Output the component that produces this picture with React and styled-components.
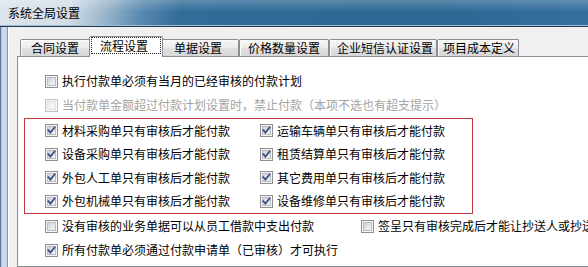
import React from 'react';
import styled, { createGlobalStyle } from 'styled-components';

const Global = createGlobalStyle`
  html, body { margin: 0; padding: 0; background: #f0f0f0; }
  #root { width: 588px; height: 267px; }
`;

const FONT = `"Noto Sans CJK SC", "Noto Sans", sans-serif`;

const Window = styled.div`
  width: 588px;
  height: 267px;
  overflow: hidden;
  display: flex;
  flex-direction: column;
  font-family: ${FONT};
  font-size: 12px;
  color: #000;
`;

const TitleBar = styled.div`
  flex: none;
  height: 27px;
  box-sizing: border-box;
  padding-left: 8px;
  display: flex;
  align-items: center;
  border-bottom: 1px solid #1e3a54;
  box-shadow: inset 0 -1px 0 #a3bfd4;
  background:
    linear-gradient(180deg, rgba(255,255,255,0.22) 0%, rgba(255,255,255,0) 45%),
    linear-gradient(100deg, #dde5ec 0px, #d3dde6 70px, #9bb7cc 105px, #5b8bb1 140px, #326c98 180px, #2d6793 420px, #3370a0 588px);
  line-height: 14px;
`;

const Frame = styled.div`
  flex: 1;
  display: flex;
  min-height: 0;
`;

const SideBorder = styled.div`
  flex: none;
  width: 6px;
  border-left: 1px solid #5f7690;
  background: linear-gradient(90deg, #b6cbe0, #cfdeee 50%, #bfd2e6);
`;

const Client = styled.div`
  flex: 1;
  min-width: 0;
  background: #f0f0f0;
  border-left: 1px solid #8c98a5;
  box-shadow: inset 1px 0 0 #ffffff;
  padding: 9px 0 0 9px;
  display: flex;
  flex-direction: column;
`;

const TabRow = styled.div`
  display: flex;
  align-items: flex-end;
  padding-left: 3px;
  height: 20px;
`;

const Tab = styled.div`
  flex: none;
  box-sizing: border-box;
  width: ${p => (p.$active ? p.$w + 4 : p.$w)}px;
  height: ${p => (p.$active ? 21 : 17)}px;
  margin: ${p => (p.$active ? '0 -2px -1px -2px' : '0')};
  position: relative;
  z-index: ${p => (p.$active ? 2 : 1)};
  border: 1px solid #898c95;
  border-bottom: none;
  border-radius: 2px 2px 0 0;
  background: ${p =>
    p.$active
      ? '#ffffff'
      : 'linear-gradient(180deg, #f5f5f5 0%, #ececec 50%, #e0e0e0 51%, #d7d7d7 100%)'};
  box-shadow: ${p => (p.$active ? 'none' : 'inset 1px 1px 0 #fbfbfb')};
  display: flex;
  align-items: ${p => (p.$active ? 'stretch' : 'center')};
  padding: ${p => (p.$active ? '0 1px 3px 1px' : `0 0 0 ${p.$pl}px`)};
  white-space: nowrap;
  line-height: 14px;
`;

const FocusRect = styled.div`
  flex: 1;
  border: 1px dotted #222;
  display: flex;
  align-items: center;
  padding-left: ${p => p.$pl}px;
`;

const Panel = styled.div`
  width: 620px;
  flex: 1;
  background: #ffffff;
  border: 1px solid #898c95;
  padding-top: 12px;
  display: flex;
  flex-direction: column;
`;

const Row = styled.div`
  height: ${p => p.$h || 24}px;
  display: flex;
  align-items: center;
  padding-left: ${p => p.$pl ?? 27}px;
  white-space: nowrap;
`;

const Group = styled.div`
  margin: 1px 0 0 6px;
  width: 449px;
  box-sizing: border-box;
  border: 1px solid #c23a3d;
  display: grid;
  grid-template-columns: 235px 1fr;
  grid-auto-rows: 23.5px;
`;

const Cell = styled.div`
  display: flex;
  align-items: center;
  padding-left: ${p => p.$pl}px;
  white-space: nowrap;
`;

const Item = styled.label`
  display: inline-flex;
  align-items: center;
  width: ${p => (p.$w ? `${p.$w}px` : 'auto')};
  flex: none;
  color: ${p => (p.$disabled ? '#a3a3a3' : '#000')};
  line-height: 14px;
`;

const Label = styled.span`
  margin-left: 4px;
`;

const Box = ({ checked, disabled }) => (
  <svg width="13" height="13" viewBox="0 0 13 13" style={{ flex: 'none' }}>
    <defs>
      <linearGradient id={disabled ? 'cbd' : 'cbn'} x1="0" y1="0" x2="1" y2="1">
        <stop offset="0" stopColor={disabled ? '#ececec' : '#cdd1d6'} />
        <stop offset="1" stopColor={disabled ? '#fafafa' : '#f7f7f7'} />
      </linearGradient>
    </defs>
    <rect x="0.5" y="0.5" width="12" height="12" fill="#f6f6f6" stroke={disabled ? '#c4c4c4' : '#8e8f8f'} />
    <rect x="2.5" y="2.5" width="8" height="8" fill={`url(#${disabled ? 'cbd' : 'cbn'})`} stroke={disabled ? '#e2e2e2' : '#b9bdc2'} />
    {checked && (
      <path d="M3.3 6.2 L5.4 8.6 L9.6 3.4" fill="none" stroke="#3b4f86" strokeWidth="1.8" strokeLinecap="square" />
    )}
  </svg>
);

const Check = ({ checked, disabled, w, children }) => (
  <Item $w={w} $disabled={disabled}>
    <Box checked={checked} disabled={disabled} />
    <Label>{children}</Label>
  </Item>
);

const tabs = [
  { label: '合同设置', w: 71, pl: 10 },
  { label: '流程设置', w: 70, pl: 8, active: true },
  { label: '单据设置', w: 78, pl: 12 },
  { label: '价格数量设置', w: 90, pl: 8 },
  { label: '企业短信认证设置', w: 108, pl: 7 },
  { label: '项目成本定义', w: 82, pl: 5 },
];

const group = [
  ['材料采购单只有审核后才能付款', '运输车辆单只有审核后才能付款'],
  ['设备采购单只有审核后才能付款', '租赁结算单只有审核后才能付款'],
  ['外包人工单只有审核后才能付款', '其它费用单只有审核后才能付款'],
  ['外包机械单只有审核后才能付款', '设备维修单只有审核后才能付款'],
];

export default function App() {
  return (
    <>
      <Global />
      <Window>
        <TitleBar>系统全局设置</TitleBar>
        <Frame>
          <SideBorder />
          <Client>
            <TabRow>
              {tabs.map(t => (
                <Tab key={t.label} $w={t.w} $pl={t.pl} $active={t.active}>
                  {t.active ? <FocusRect $pl={t.pl}>{t.label}</FocusRect> : t.label}
                </Tab>
              ))}
            </TabRow>
            <Panel>
              <Row>
                <Check>执行付款单必须有当月的已经审核的付款计划</Check>
              </Row>
              <Row>
                <Check disabled>当付款单金额超过付款计划设置时，禁止付款（本项不选也有超支提示）</Check>
              </Row>
              <Group>
                {group.map(([a, b]) => (
                  <React.Fragment key={a}>
                    <Cell $pl={20}>
                      <Check checked>{a}</Check>
                    </Cell>
                    <Cell $pl={0}>
                      <Check checked>{b}</Check>
                    </Cell>
                  </React.Fragment>
                ))}
              </Group>
              <Row>
                <Check w={316}>没有审核的业务单据可以从员工借款中支出付款</Check>
                <Check>签呈只有审核完成后才能让抄送人或抄送人查看</Check>
              </Row>
              <Row>
                <Check checked>所有付款单必须通过付款申请单（已审核）才可执行</Check>
              </Row>
            </Panel>
          </Client>
        </Frame>
      </Window>
    </>
  );
}
